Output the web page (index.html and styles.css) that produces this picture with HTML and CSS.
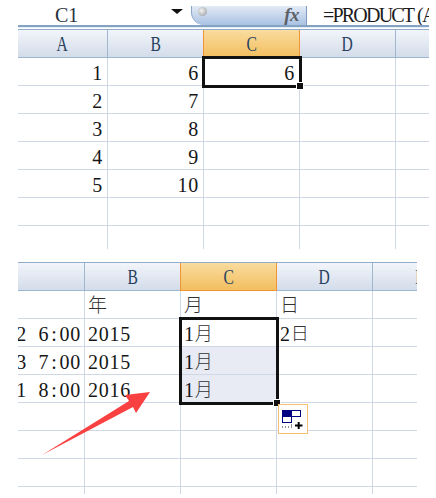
FILE: index.html
```html
<!DOCTYPE html>
<html lang="zh">
<head>
<meta charset="utf-8">
<title>Excel</title>
<link rel="stylesheet" href="styles.css">
</head>
<body>
<div class="page">
  <section class="top">
    <div class="formula">
      <span class="name">C1</span>
      <span class="caret"></span>
      <div class="pill"><span class="knob"></span><span class="fx">fx</span></div>
      <span class="expr">=PRODUCT (A</span>
    </div>
    <div class="rule"></div>
    <div class="sheet sheet-a">
      <div class="hd"><span>A</span></div><div class="hd"><span>B</span></div><div class="hd on"><span>C</span></div><div class="hd"><span>D</span></div><div class="hd"></div>
      <div class="c r">1</div><div class="c r">6</div><div class="c r">6</div><div class="c"></div><div class="c"></div>
      <div class="c r">2</div><div class="c r">7</div><div class="c"></div><div class="c"></div><div class="c"></div>
      <div class="c r">3</div><div class="c r">8</div><div class="c"></div><div class="c"></div><div class="c"></div>
      <div class="c r">4</div><div class="c r">9</div><div class="c"></div><div class="c"></div><div class="c"></div>
      <div class="c r">5</div><div class="c r">10</div><div class="c"></div><div class="c"></div><div class="c"></div>
      <div class="c"></div><div class="c"></div><div class="c"></div><div class="c"></div><div class="c"></div>
      <div class="c e"></div><div class="c e"></div><div class="c e"></div><div class="c e"></div><div class="c e"></div>
      <div class="sel sel-a"></div>
    </div>
  </section>

  <section class="bottom">
    <div class="sheet sheet-b">
      <div class="hd"></div><div class="hd"><span>B</span></div><div class="hd on"><span>C</span></div><div class="hd"><span>D</span></div><div class="hd hd-e"><span>E</span></div>
      <div class="c"></div><div class="c"><span class="cjk wide">年</span></div><div class="c"><span class="cjk wide">月</span></div><div class="c"><span class="cjk wide">日</span></div><div class="c"></div>
      <div class="c r t">2&nbsp;&nbsp;6<span class="colon">:</span>00</div><div class="c">2015</div><div class="c">1<span class="cjk">月</span></div><div class="c">2<span class="cjk">日</span></div><div class="c"></div>
      <div class="c r t">3&nbsp;&nbsp;7<span class="colon">:</span>00</div><div class="c">2015</div><div class="c fill">1<span class="cjk">月</span></div><div class="c"></div><div class="c"></div>
      <div class="c r t">1&nbsp;&nbsp;8<span class="colon">:</span>00</div><div class="c">2016</div><div class="c fill">1<span class="cjk">月</span></div><div class="c"></div><div class="c"></div>
      <div class="c"></div><div class="c"></div><div class="c"></div><div class="c"></div><div class="c"></div>
      <div class="c"></div><div class="c"></div><div class="c"></div><div class="c"></div><div class="c"></div>
      <div class="c"></div><div class="c"></div><div class="c"></div><div class="c"></div><div class="c"></div>
      <div class="c e"></div><div class="c e"></div><div class="c e"></div><div class="c e"></div><div class="c e"></div>
      <div class="sel sel-b"></div>
      <div class="autofill">
        <svg width="23" height="19" viewBox="0 0 23 19" aria-hidden="true">
          <rect x="0.5" y="0.5" width="9" height="6" fill="#000080" stroke="#000080"/>
          <rect x="9.5" y="0.5" width="9" height="6" fill="#fff" stroke="#000080"/>
          <rect x="0.5" y="6.5" width="9" height="6" fill="#fff" stroke="#000080"/>
          <path d="M0 17h1M3 17h1M6 17h1M9 17h1" stroke="#222" stroke-width="1"/>
          <path d="M9.5 14.5v1" stroke="#222" stroke-width="1"/>
          <path d="M13 15.5h7.5M16.7 12v7" stroke="#000" stroke-width="2"/>
        </svg>
      </div>
    </div>
  </section>

  <svg class="arrow" width="112" height="66" viewBox="0 0 112 66" aria-hidden="true">
    <polygon points="1,64 88,10 84,4 109,1 95,22 92,16" fill="#f94141"/>
  </svg>
</div>
</body>
</html>
```

FILE: styles.css
```css
* { box-sizing: border-box; }
html, body { margin: 0; padding: 0; background: #fff; }
body { width: 436px; height: 498px; overflow: hidden; }

.page {
  position: relative;
  width: 436px;
  height: 498px;
  padding: 6px 0 0 18px;
  font-family: "Liberation Serif", "Noto Sans CJK SC", serif;
  font-size: 20px;
  color: #161616;
}

.top { width: 411px; }
.bottom { width: 399px; margin-top: 13px; }

.formula {
  display: flex;
  align-items: flex-start;
  height: 19px;
  overflow: hidden;
}
.formula > * { flex: none; }
.name {
  margin-left: 37px;
  width: 116px;
  line-height: 18px;
  font-size: 20px;
  color: #27313d;
}
.caret {
  width: 0;
  height: 0;
  margin-top: 3px;
  border-left: 6px solid transparent;
  border-right: 6px solid transparent;
  border-top: 5px solid #111;
}
.pill {
  display: flex;
  align-items: flex-start;
  justify-content: space-between;
  width: 116px;
  height: 19px;
  margin-left: 8px;
  padding: 0 7px 0 6px;
  border-radius: 0 0 0 13px;
  border-right: 1px solid #7f9cbf;
  border-left: 1px solid #8aa5c8;
  background: linear-gradient(#e3eaf6, #a9c2e3);
}
.knob {
  width: 9px;
  height: 9px;
  margin-top: 1px;
  border-radius: 50%;
  background: radial-gradient(circle at 40% 40%, #f4f4f4, #8f9499);
}
.fx {
  font-size: 19px;
  line-height: 17px;
  font-style: italic;
  font-weight: bold;
  color: #5d6066;
  letter-spacing: -0.5px;
}
.expr {
  margin-left: 16px;
  white-space: pre;
  line-height: 18px;
  letter-spacing: -1.8px;
  word-spacing: 1px;
  color: #1c1c1c;
}

.rule {
  height: 4px;
  border-top: 2px solid #84a2c4;
  background: linear-gradient(#e6edf5 0 1px, #fff 1px);
}

.sheet {
  position: relative;
  display: grid;
  overflow: hidden;
  border-top: 1px solid #8fadcb;
}
.sheet-a {
  grid-template-columns: 90px 96px 96px 96px 96px;
  grid-template-rows: 28px repeat(6, 28px) 23px;
}
.sheet-b {
  grid-template-columns: 67px 96px 96px 96px 96px;
  grid-template-rows: 28px repeat(7, 28px) 7px;
}

.hd {
  display: flex;
  align-items: center;
  justify-content: center;
  padding-top: 2px;
  border-right: 1px solid #9eb6ce;
  border-bottom: 1px solid #9eb6ce;
  background: linear-gradient(#f2f5fa, #d3dcea);
  color: #27415f;
  font-size: 20px;
}
.hd span { display: inline-block; transform: scaleX(0.78); }
.hd.on {
  background: linear-gradient(#f9dc9f, #f3be5f);
  border-left: 1px solid #f29536;
  border-right-color: #f29536;
  border-bottom-color: #f29536;
  margin-left: -1px;
}
.hd-e { overflow: hidden; }

.c {
  display: flex;
  align-items: flex-end;
  min-width: 0;
  padding: 0 0 0 3px;
  border-right: 1px solid #d0d7e5;
  border-bottom: 1px solid #d0d7e5;
  line-height: 24px;
  white-space: nowrap;
  letter-spacing: 0.75px;
  overflow: hidden;
}
.c.r { justify-content: flex-end; padding: 0 4px 0 0; }
.c.t { padding-right: 3px; }
.c.e { border-bottom: 0; }
.c.fill { background: #e8ebf4; }

.colon { padding: 0 2px; }
.cjk { font-size: 18px; font-weight: 300; letter-spacing: 0; color: #333; }
.cjk.wide { font-size: 19px; }

.sel {
  position: absolute;
  top: -2px;
  right: -2px;
  bottom: -2px;
  left: -2px;
  border: 3px solid #111;
}
.sel::after {
  content: "";
  position: absolute;
  right: -4px;
  bottom: -4px;
  width: 6px;
  height: 6px;
  background: #111;
  border: 1px solid #fff;
  box-sizing: content-box;
  margin: -1px;
}
.sel-a { grid-column: 3 / 4; grid-row: 2 / 3; }
.sel-b { grid-column: 3 / 4; grid-row: 3 / 6; }

.autofill {
  position: absolute;
  top: 1px;
  left: 1px;
  grid-column: 4 / 5;
  grid-row: 6 / 8;
  display: flex;
  align-items: center;
  justify-content: center;
  width: 30px;
  height: 30px;
  border: 1px solid #f7bf72;
  background: #fff;
}

.arrow {
  position: absolute;
  left: 41px;
  top: 391px;
}
```
